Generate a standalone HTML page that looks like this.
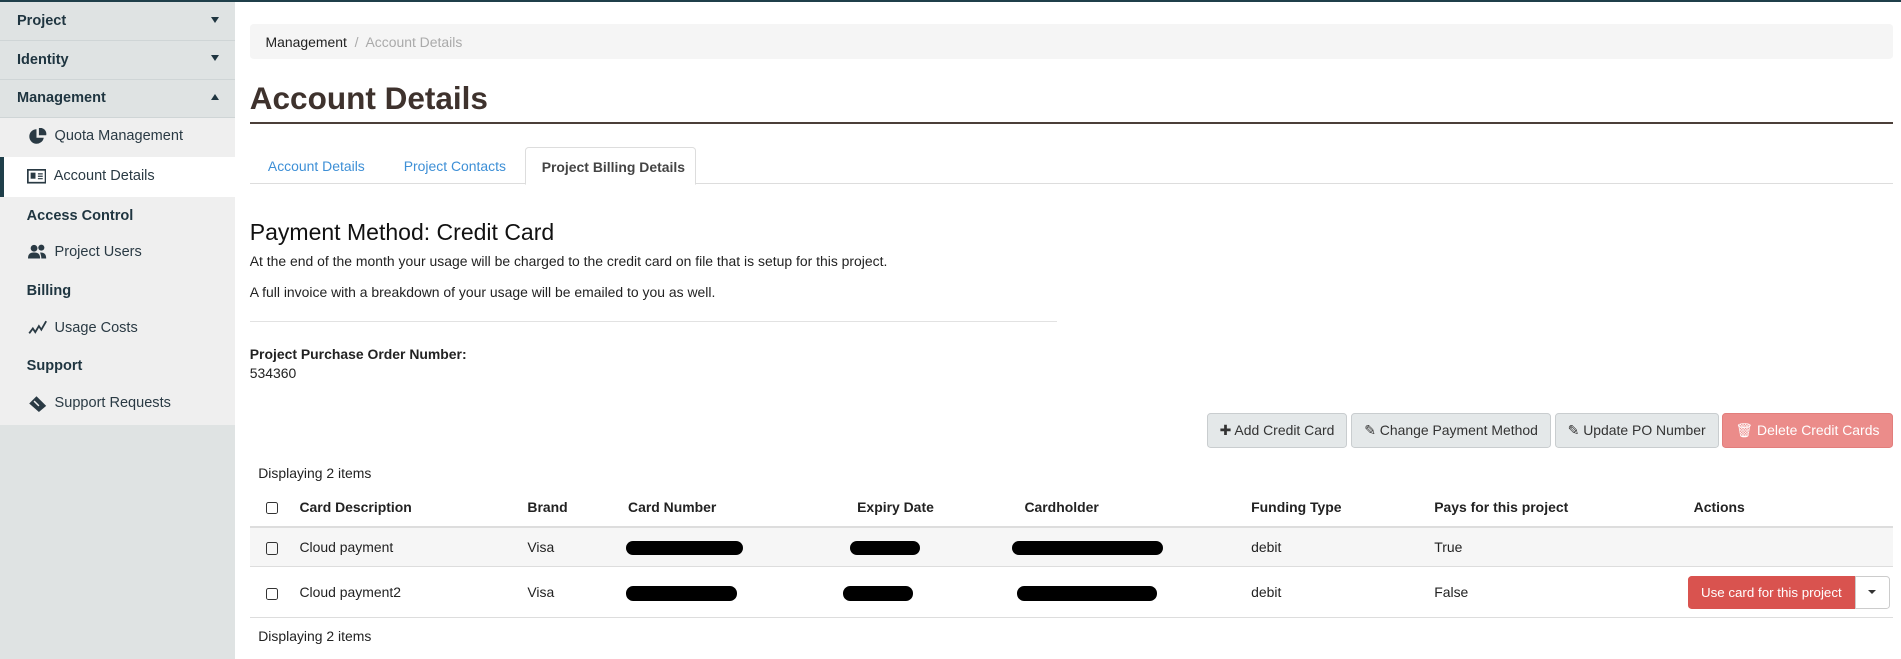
<!DOCTYPE html>
<html><head><style>
*{box-sizing:border-box;margin:0;padding:0}
html,body{width:1901px;height:659px;overflow:hidden;background:#fff}
#w{zoom:1.2124;width:1568px;height:544px;position:relative;font-family:"Liberation Sans",sans-serif;font-size:11.5px;color:#222;border-top:2px solid #1f3f4a}
.sb{position:absolute;left:0;top:0;width:194px;height:544px;background:#dfe3e3}
.h{height:32px;border-bottom:1px solid #cfd5d6;background:#dfe3e3;font-weight:bold;font-size:12px;color:#1f3540;padding:9px 0 0 14px;position:relative}
.h .c{position:absolute;right:13px;top:12px;width:0;height:0;border-left:4px solid transparent;border-right:4px solid transparent;border-top:5px solid #1f3540}
.h .c.up{border-top:0;border-bottom:5px solid #1f3540}
.sub{background:#efefef}
.it{height:31px;padding:8px 0 0 45px;font-size:12px;color:#2a3a44;position:relative;white-space:nowrap}
.it.act{background:#fff;border-left:4px solid #1f3f4a;padding-left:41px;height:33px;padding-top:9px}
.it svg{position:absolute;left:23px;top:8px}
.it.act svg{left:19px;top:10px}
.sec{height:31px;padding:9px 0 0 22px;font-weight:bold;font-size:12px;color:#1f3540}
.main{position:absolute;left:206px;top:18px;width:1355px}
.bc{background:#f5f5f5;height:29px;border-radius:3px;padding:8px 0 0 13px;font-size:11.5px}
.bc span{color:#aaa}
h1{font-size:26px;color:#3e322d;margin-top:17px;height:37px;border-bottom:2px solid #4b3f39;font-weight:bold;line-height:30px}
.tabs{margin-top:19px;height:30px;border-bottom:1px solid #ddd;position:relative}
.tab{position:absolute;top:0;height:30px;padding-top:9px;font-size:11.5px;color:#3d8fd6;white-space:nowrap}
.tab.a{border:1px solid #ddd;border-bottom-color:#fff;background:#fff;color:#444;font-weight:bold;padding-left:13px;width:141px;height:31px;border-radius:3px 3px 0 0}
h2{font-weight:normal;font-size:19px;margin-top:29px;color:#111}
p{font-size:11.5px;margin-top:6px;line-height:14px}
hr{border:0;border-top:1px solid #e2e2e2;width:666px;margin-top:17px}
.btns{position:absolute;top:321px;right:0;display:flex;gap:3px}
.b{height:29px;border:1px solid #c9cdcf;background:#e4e8e9;border-radius:3px;padding:7px 10px 0;font-size:11.5px;color:#333;white-space:nowrap}
.b.r{background:#eb8c8a;border-color:#e27e7c;color:#fff}
table{position:absolute;top:383px;left:0;width:1355px;border-collapse:collapse;font-size:11.5px}
th{text-align:left;height:32px;border-bottom:2px solid #ddd;font-weight:bold;white-space:nowrap}
td{height:33px;border-bottom:1px solid #ddd;white-space:nowrap}
tr.g td{background:#f6f6f6}
.cb{display:inline-block;width:10px;height:10px;border:1.5px solid #333;border-radius:2px;margin-left:13px;vertical-align:middle}
.red{display:inline-block;background:#000;height:12px;border-radius:6px;vertical-align:middle}
.use{display:inline-flex;height:27px;margin-left:-5px}
.use .x{background:#d9534f;color:#fff;padding:7px 11px 0;border-radius:3px 0 0 3px;font-size:11px;white-space:nowrap}
.use .y{border:1px solid #ccc;width:29px;border-radius:0 3px 3px 0;position:relative}
.use .y:after{content:"";position:absolute;left:10px;top:11px;border-left:4px solid transparent;border-right:4px solid transparent;border-top:4px solid #333}
</style></head><body><div id="w">
<div class="sb">
<div class="h">Project<span class="c"></span></div>
<div class="h">Identity<span class="c"></span></div>
<div class="h">Management<span class="c up"></span></div>
<div class="sub">
<div class="it" style="height:32px"><svg width="16" height="14" viewBox="0 0 16 14"><path d="M7 1A6 6 0 1 0 13 8H7Z" fill="#2a3a44"/><path d="M9 0A5 5 0 0 1 15 6H9Z" fill="#2a3a44"/></svg>Quota Management</div>
<div class="it act"><svg width="16" height="12" viewBox="0 0 16 12"><rect x="0.7" y="0.7" width="14.6" height="10.6" fill="none" stroke="#2a3a44" stroke-width="1.4"/><rect x="3" y="3" width="4" height="5" fill="#2a3a44"/><path d="M9 4h4M9 6h4M9 8h4" stroke="#2a3a44"/></svg>Account Details</div>
<div class="sec">Access Control</div>
<div class="it"><svg width="16" height="13" viewBox="0 0 16 13"><circle cx="5" cy="3.5" r="2.8" fill="#2a3a44"/><circle cx="11" cy="3" r="2.5" fill="#2a3a44"/><path d="M0 12c0-4 2-5 5-5s5 1 5 5Z" fill="#2a3a44"/><path d="M10 7c3 0 5 1 5 5h-4c0-2-0.5-3-1-5Z" fill="#2a3a44"/></svg>Project Users</div>
<div class="sec">Billing</div>
<div class="it"><svg width="16" height="13" viewBox="0 0 16 13"><path d="M1 11l3-4 2 3 3-5 2 3 4-7" fill="none" stroke="#2a3a44" stroke-width="1.5"/></svg>Usage Costs</div>
<div class="sec">Support</div>
<div class="it" style="height:33px"><svg width="16" height="14" viewBox="0 0 16 14"><path d="M1 7l6-6 8 8-6 5Z" fill="#2a3a44"/><path d="M5 5l4 4" stroke="#efefef" stroke-width="1.2"/></svg>Support Requests</div>
</div>
</div>
<div class="main">
<div class="bc">Management <span>&nbsp;/&nbsp; Account Details</span></div>
<h1>Account Details</h1>
<div class="tabs">
<div class="tab" style="left:15px">Account Details</div>
<div class="tab" style="left:127px">Project Contacts</div>
<div class="tab a" style="left:227px">Project Billing Details</div>
</div>
<h2>Payment Method: Credit Card</h2>
<p>At the end of the month your usage will be charged to the credit card on file that is setup for this project.</p>
<p style="margin-top:11px">A full invoice with a breakdown of your usage will be emailed to you as well.</p>
<hr>
<p style="font-weight:bold;margin-top:20px">Project Purchase Order Number:</p>
<p style="margin-top:1px">534360</p>
<div class="btns">
<div class="b">✚ Add Credit Card</div>
<div class="b">✎ Change Payment Method</div>
<div class="b">✎ Update PO Number</div>
<div class="b r">🗑 Delete Credit Cards</div>
</div>
<div style="position:absolute;top:364px;left:7px">Displaying 2 items</div>
<table>
<tr><th style="width:41px"><span class="cb"></span></th><th style="width:188px">Card Description</th><th style="width:83px">Brand</th><th style="width:189px">Card Number</th><th style="width:138px">Expiry Date</th><th style="width:187px">Cardholder</th><th style="width:151px">Funding Type</th><th style="width:214px">Pays for this project</th><th>Actions</th></tr>
<tr class="g"><td><span class="cb"></span></td><td>Cloud payment</td><td>Visa</td><td><span class="red" style="width:97px;margin-left:-2px"></span></td><td><span class="red" style="width:58px;margin-left:-6px"></span></td><td><span class="red" style="width:124px;margin-left:-10px"></span></td><td>debit</td><td>True</td><td></td></tr>
<tr><td style="height:42px"><span class="cb"></span></td><td>Cloud payment2</td><td>Visa</td><td><span class="red" style="width:92px;margin-left:-2px"></span></td><td><span class="red" style="width:58px;margin-left:-12px"></span></td><td><span class="red" style="width:115px;margin-left:-6px"></span></td><td>debit</td><td>False</td><td><span class="use"><span class="x">Use card for this project</span><span class="y"></span></span></td></tr>
</table>
<div style="position:absolute;top:498px;left:7px">Displaying 2 items</div>
</div>
</div></body></html>
